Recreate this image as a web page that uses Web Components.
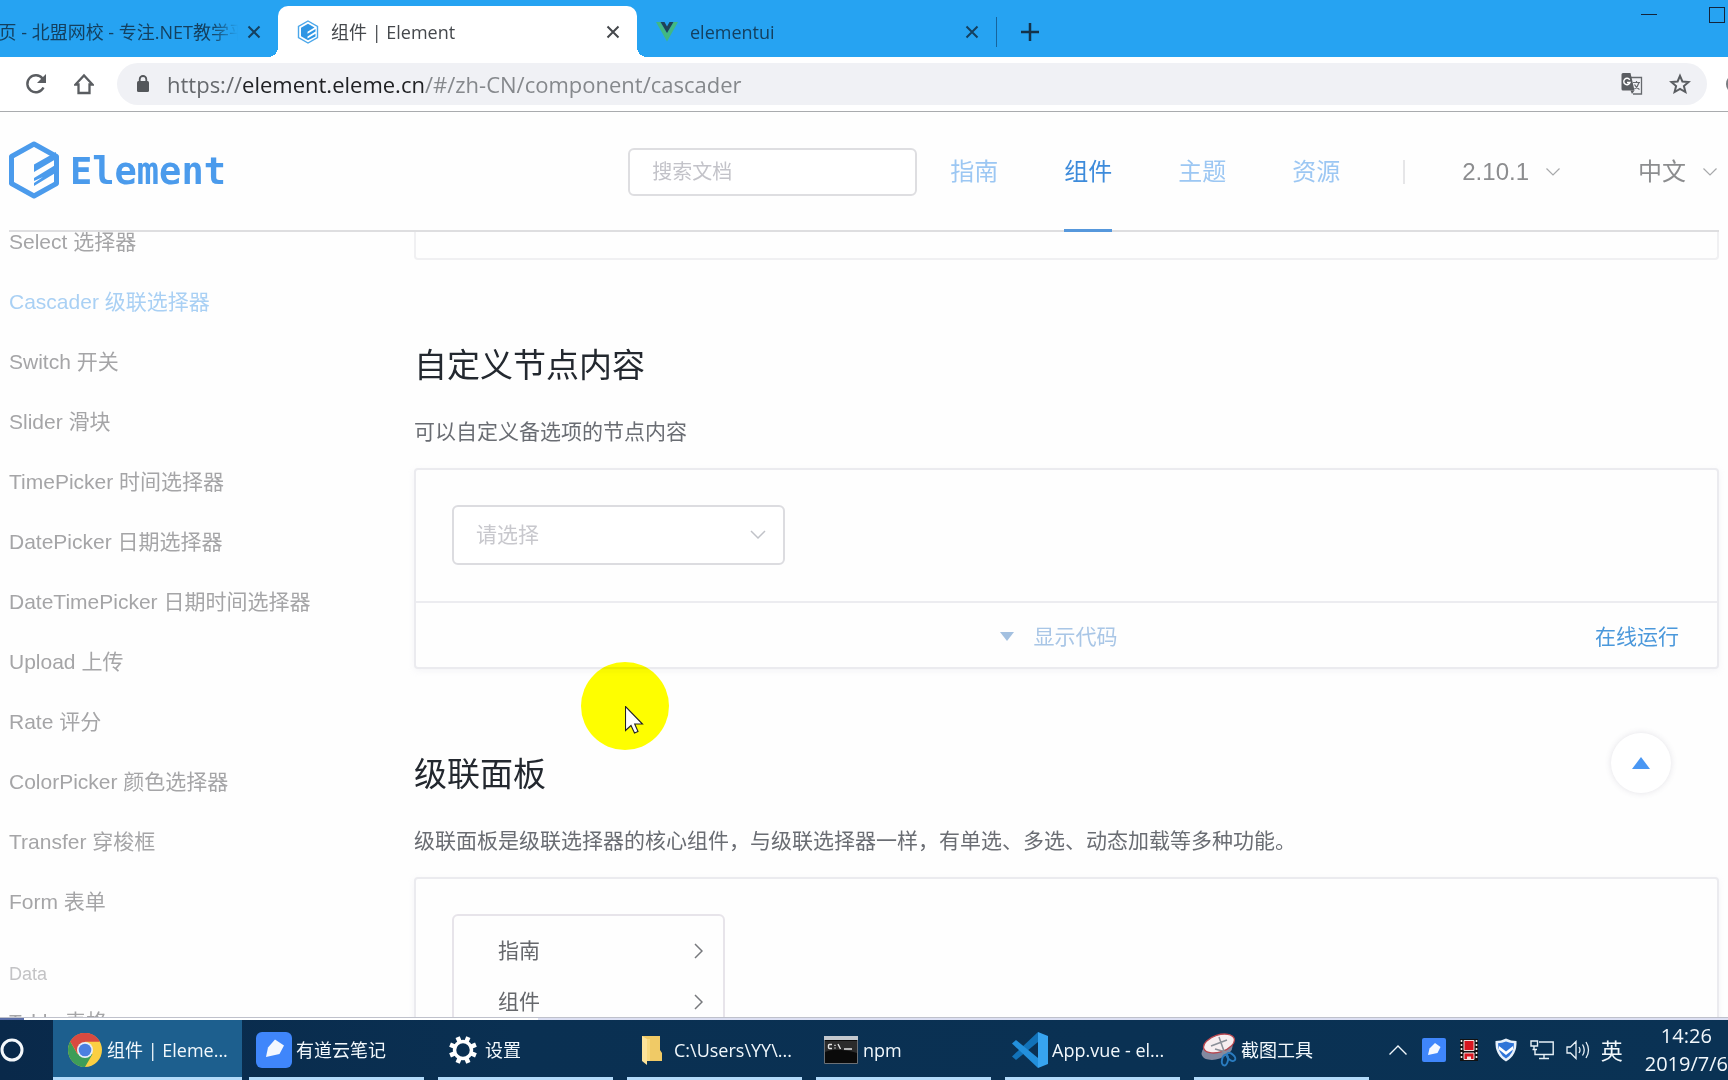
<!DOCTYPE html>
<html lang="zh-CN">
<head>
<meta charset="utf-8">
<title>组件 | Element</title>
<style>
  html, body { margin: 0; height: 100%; }
  body { overflow: hidden; background: #fefefe; font-family: "Liberation Sans", "Noto Sans CJK SC", sans-serif; }
</style>
</head>
<body>
<desktop-view></desktop-view>

<script>
const define = (name, html) => {
  const tpl = document.createElement('template');
  tpl.innerHTML = '<style>*{box-sizing:border-box}button{font:inherit;color:inherit;background:none;border:0;padding:0;margin:0}a{color:inherit;text-decoration:none}svg{display:block;flex:none}</style>' + html;
  customElements.define(name, class extends HTMLElement {
    constructor() {
      super();
      this.attachShadow({ mode: 'open' }).appendChild(tpl.content.cloneNode(true));
    }
  });
};

/* ---------- browser frame ---------- */
define('browser-tab', `
<style>
  :host { display: flex; flex: none; width: 359px; padding-left: 19px; height: 51px; align-items: center; position: relative; color: #14405f; }
  :host([active]) { background: #fff; border-radius: 10px 10px 0 0; color: #45484c; }
  :host([active])::before, :host([active])::after { content: ""; position: absolute; bottom: 0; width: 10px; height: 10px; }
  :host([active])::before { right: 100%; background: radial-gradient(circle at 0 0, transparent 10px, #fff 10px); }
  :host([active])::after { left: 100%; background: radial-gradient(circle at 100% 0, transparent 10px, #fff 10px); }
  :host([first]) { width: 278px; padding-left: 0; }
  .pick { flex: 1; min-width: 0; display: flex; align-items: center; gap: 12px; height: 100%; }
  .label { flex: 1; min-width: 0; overflow: hidden; white-space: nowrap; text-align: left; font-size: 18px; line-height: 28px; }
  :host([first]) .label { display: flex; justify-content: flex-end; -webkit-mask-image: linear-gradient(to right, #000 212px, transparent 238px); }
  .close { width: 14px; height: 14px; margin-right: 17px; }
</style>
<button class="pick" role="tab"><slot name="icon"></slot><span class="label"><slot></slot></span></button>
<button class="close" aria-label="关闭"><svg width="14" height="14" viewBox="0 0 14 14" stroke="currentColor" stroke-width="2" fill="none"><path d="M1.500 1.500l11 11M12.500 1.500l-11 11"/></svg></button>
`);

define('browser-tabs', `
<style>
  :host { display: flex; justify-content: space-between; background: #26a3f2; height: 57px; font-family: "Open Sans", "Noto Sans CJK SC", sans-serif; }
  .tabs { display: flex; align-items: flex-end; }
  .add { display: flex; align-items: center; height: 51px; gap: 24px; }
  .add i { width: 1px; height: 30px; background: #17649c; }
  .win { display: flex; gap: 52px; padding: 7px 3px 0 0; align-items: flex-start; }
</style>
<div class="tabs" role="tablist">
  <browser-tab first>页 - 北盟网校 - 专注.NET教学平</browser-tab>
  <browser-tab active>
    <svg slot="icon" width="22" height="24" viewBox="0 0 22 24"><path d="M11 1l9.500 5.500v11L11 23l-9.500-5.500v-11z" fill="none" stroke="#4ba7ea" stroke-width="1.400"/><path d="M11 3.800l6.500 3.700-7 4.300v2l8-4.800v2.600l-8 4.800v2l8-4.700v2.800L11 20.300l-7-4V7.800z" fill="#2f96e4"/></svg>
    组件 | Element</browser-tab>
  <browser-tab>
    <svg slot="icon" width="22" height="20" viewBox="0 0 22 20"><path d="M0 0h4.500L11 11 17.500 0H22L11 19.500z" fill="#41b883"/><path d="M4.500 0h4L11 4.500 13.500 0h4L11 11z" fill="#1f4258"/></svg>
    elementui</browser-tab>
  <div class="add"><i></i><button aria-label="新标签页"><svg width="18" height="18" viewBox="0 0 18 18" stroke="#14324a" stroke-width="2.500"><path d="M9 0v18M0 9h18"/></svg></button></div>
</div>
<div class="win">
  <button aria-label="最小化"><svg width="16" height="16" viewBox="0 0 16 16" stroke="#14243a"><path d="M0 7.500h16"/></svg></button>
  <button aria-label="最大化"><svg width="16" height="16" viewBox="0 0 16 16" stroke="#14243a" fill="none"><rect x=".5" y=".5" width="15" height="15"/></svg></button>
</div>
`);

define('browser-toolbar', `
<style>
  :host { display: flex; align-items: center; height: 55px; border-bottom: 1px solid #a9abae; background: #fff; padding: 0 0 0 24px; color: #5a5d61; font-family: "Open Sans", "Noto Sans CJK SC", sans-serif; overflow: hidden; }
  .home { margin: 0 23px 0 26px; }
  .bar { flex: 1; display: flex; align-items: center; height: 42px; background: #f0f1f5; border-radius: 21px; padding: 0 16px 0 20px; }
  .url { flex: 1; margin-left: 18px; font-size: 22px; line-height: 30px; color: #85888c; white-space: nowrap; outline: 0; }
  .url b { font-weight: 400; color: #202124; }
  .url span { color: #66696d; }
  .star { margin-left: 26px; }
  .me { width: 21px; height: 21px; overflow: hidden; }
  .me svg { margin-left: 19px; }
</style>
<button aria-label="重新加载"><svg width="24" height="24" viewBox="0 0 24 24" fill="none" stroke="currentColor" stroke-width="2.400"><path d="M19.500 15.500A8.500 8.500 0 1 1 18.500 6.500"/><path d="M22 2v9h-9z" fill="currentColor" stroke="none"/></svg></button>
<button class="home" aria-label="主页"><svg width="20" height="22" viewBox="0 0 20 22" fill="none" stroke="currentColor" stroke-width="2.300"><path d="M1.500 11.500L10 2.500l8.500 9H15.500V20h-11v-8.500z"/></svg></button>
<div class="bar">
  <svg width="12" height="18" viewBox="0 0 12 18"><rect y="6" width="12" height="11" rx="1.500" fill="#54575b"/><path d="M2.700 7V4.300a3.300 3.300 0 0 1 6.600 0V7" fill="none" stroke="#54575b" stroke-width="1.800"/></svg>
  <div class="url" role="textbox" aria-label="网址"><span>https://</span><b>element.eleme.cn</b>/#/zh-CN/component/cascader</div>
  <button aria-label="翻译"><svg width="22" height="22" viewBox="0 0 22 22"><path d="M10 4.500h10.500v16.500H12" fill="none" stroke="#66696d" stroke-width="1.300"/><path d="M2 0h7.500l4 17.500H2a1.500 1.500 0 0 1-1.500-1.500V1.500A1.500 1.500 0 0 1 2 0z" fill="#5a5d61"/><path d="M9.500 17.500h4L11 21z" fill="#5a5d61"/><path d="M8.700 6.800A3.200 3.200 0 1 0 9 9.500H6" fill="none" stroke="#fff" stroke-width="1.400"/><path d="M12 9.500h7M15.500 8v1.500M18 9.500q-1 4-4.500 6.500M13.500 11.500q1.500 3 5 5" fill="none" stroke="#66696d" stroke-width="1.200"/></svg></button>
  <button class="star" aria-label="收藏"><svg width="22" height="22" viewBox="0 0 22 22" fill="none" stroke="currentColor" stroke-width="2"><path d="M11 2.800l2.400 5.700 6.200.5-4.700 4 1.500 6L11 15.800 5.600 19l1.500-6-4.700-4 6.200-.5z"/></svg></button>
</div>
<div class="me"><svg width="20" height="20"><circle cx="10" cy="10" r="10" fill="#777b80"/></svg></div>
`);

/* ---------- site ---------- */
define('site-logo', `
<style>
  :host { display: block; }
  a { display: flex; align-items: center; gap: 11px; color: #4b9bec; font: bold 37px/58px "DejaVu Sans Mono", monospace; }
</style>
<a href="#/"><svg width="50" height="62" viewBox="0 0 50 62"><path d="M25 3L47.500 15.500v27L25 55 2.500 42.500v-27z" fill="none" stroke="#4b9bec" stroke-width="5" stroke-linejoin="round"/><path d="M25 23.500L47 11v7L25 31zM25 37L48 23v8L25 45v-3l9-6-9 4z" fill="#4b9bec"/></svg><span>Element</span></a>
`);

define('nav-link', `
<style>
  :host { display: block; padding: 0 33px; }
  a { display: block; font-size: 24px; line-height: 116px; height: 118px; color: #9cc7f3; white-space: nowrap; }
  :host([active]) a { color: #3d8bdb; border-bottom: 3px solid #5698dc; }
</style>
<a href="#/"><slot></slot></a>
`);

define('nav-drop', `
<style>
  :host { display: block; }
  button { display: flex; align-items: center; gap: 17px; font-size: 24px; line-height: 40px; color: #8c8d8f; }
</style>
<button aria-haspopup="listbox"><slot></slot><svg width="14" height="8" viewBox="0 0 14 8" fill="none" stroke="#a8a9ab" stroke-width="1.200"><path d="M.5.5L7 7 13.500.500"/></svg></button>
`);

define('site-header', `
<style>
  :host { display: block; padding: 0 9px; position: relative; z-index: 1; }
  header { display: flex; align-items: center; height: 120px; padding-top: 2px; border-bottom: 2px solid #dedee0; }
  .search { margin-left: auto; }
  input { display: block; width: 289px; height: 48px; border: 2px solid #dedee1; border-radius: 6px; background: #fff; font: 20px "Liberation Sans", "Noto Sans CJK SC", sans-serif; padding: 0 22px; outline: 0; }
  input::placeholder { color: #c3c3c9; }
  nav { display: flex; height: 118px; align-self: flex-start; }
  i { width: 2px; height: 24px; background: #e6e6e8; margin: 0 57px 0 30px; }
  .lang { margin-left: 78px; margin-right: 2px; }
</style>
<header>
  <site-logo></site-logo>
  <label class="search"><input type="text" placeholder="搜索文档" aria-label="搜索文档"></label>
  <nav><nav-link>指南</nav-link><nav-link active>组件</nav-link><nav-link>主题</nav-link><nav-link>资源</nav-link></nav>
  <i></i>
  <nav-drop>2.10.1</nav-drop>
  <nav-drop class="lang">中文</nav-drop>
</header>
`);

define('side-link', `
<style>
  :host { display: block; }
  a { display: block; font-size: 21px; line-height: 60px; color: #a5a5a7; white-space: nowrap; }
  :host([active]) a { color: #a9d0f4; }
</style>
<a href="#/"><slot></slot></a>
`);

define('side-nav', `
<style>
  :host { display: block; flex: none; width: 405px; overflow: hidden; }
  nav { margin-top: -20px; }
  h4 { margin: 27px 0 3px; font-size: 18px; line-height: 30px; font-weight: 400; color: #c3c3c5; }
</style>
<nav>
  <side-link>Select 选择器</side-link>
  <side-link active>Cascader 级联选择器</side-link>
  <side-link>Switch 开关</side-link>
  <side-link>Slider 滑块</side-link>
  <side-link>TimePicker 时间选择器</side-link>
  <side-link>DatePicker 日期选择器</side-link>
  <side-link>DateTimePicker 日期时间选择器</side-link>
  <side-link>Upload 上传</side-link>
  <side-link>Rate 评分</side-link>
  <side-link>ColorPicker 颜色选择器</side-link>
  <side-link>Transfer 穿梭框</side-link>
  <side-link>Form 表单</side-link>
  <h4>Data</h4>
  <side-link>Table 表格</side-link>
</nav>
`);

define('demo-block', `
<style>
  :host { display: block; border: 2px solid #ebebef; border-radius: 4px; box-shadow: 0 2px 6px rgba(200,200,215,.18); background: #fefefe; }
  .source { padding: 35px 36px 36px; }
  .control { display: flex; align-items: center; height: 66px; border-top: 2px solid #ececf0; padding: 3px 38px 0 0; font-size: 21px; line-height: 30px; }
  .control::before { content: ""; flex: none; width: 106px; }
  .toggle { display: flex; align-items: center; gap: 20px; margin: auto; color: #a9c6e6; }
  a { color: #4b98db; }
  :host([tail]) { border-top: 0; border-radius: 0 0 4px 4px; height: 28px; box-shadow: none; border-color: #f0f0f2; }
  :host([tail]) .source, :host([tail]) .control, :host([open]) .control { display: none; }
</style>
<div class="source"><slot></slot></div>
<div class="control">
  <button class="toggle"><svg width="14" height="9" viewBox="0 0 14 9"><path d="M0 0h14L7 9z" fill="#a3c0e0"/></svg>显示代码</button>
  <a href="#/">在线运行</a>
</div>
`);

define('el-cascader', `
<style>
  :host { display: flex; align-items: center; width: 333px; height: 60px; border: 2px solid #dcdce0; border-radius: 6px; padding: 0 17px 0 22px; background: #fff; }
  input { flex: 1; min-width: 0; border: 0; outline: 0; background: none; padding: 0; font: 21px "Liberation Sans", "Noto Sans CJK SC", sans-serif; }
  input::placeholder { color: #c8c8cd; }
</style>
<input type="text" readonly placeholder="请选择" aria-label="请选择">
<svg width="16" height="10" viewBox="0 0 16 10" fill="none" stroke="#c0c2c8" stroke-width="1.500"><path d="M1 1l7 7 7-7"/></svg>
`);

define('panel-item', `
<style>
  :host { display: block; }
  button { display: flex; width: 100%; align-items: center; justify-content: space-between; padding: 0 20px 0 44px; font-size: 21px; line-height: 51px; color: #66686c; }
</style>
<button><slot></slot><svg width="9" height="16" viewBox="0 0 9 16" fill="none" stroke="#77797d" stroke-width="1.500"><path d="M1 1l7 7-7 7"/></svg></button>
`);

define('el-cascader-panel', `
<style>
  :host { display: block; width: 273px; height: 306px; border: 2px solid #e7e4ea; border-radius: 6px; padding-top: 9px; }
</style>
<slot></slot>
`);

define('doc-content', `
<style>
  :host { display: block; flex: 1; min-width: 0; }
  h3 { margin: 83px 0 28px; font-size: 33px; line-height: 46px; font-weight: 400; color: #23282f; }
  p { margin: 0 0 21px; font-size: 21px; line-height: 30px; color: #6a6d73; }
</style>
<demo-block tail></demo-block>
<h3>自定义节点内容</h3>
<p>可以自定义备选项的节点内容</p>
<demo-block><el-cascader></el-cascader></demo-block>
<h3>级联面板</h3>
<p>级联面板是级联选择器的核心组件，与级联选择器一样，有单选、多选、动态加载等多种功能。</p>
<demo-block open><el-cascader-panel><panel-item>指南</panel-item><panel-item>组件</panel-item></el-cascader-panel></demo-block>
`);

define('back-top', `
<style>
  :host { display: block; position: absolute; right: 57px; bottom: 287px; }
  button { display: flex; align-items: center; justify-content: center; width: 60px; height: 60px; border-radius: 30px; background: #fff; box-shadow: 0 0 6px rgba(90,80,110,.16); }
</style>
<button aria-label="回到顶部"><svg width="18" height="12" viewBox="0 0 18 12"><path d="M9 0l9 12H0z" fill="#4a97f3"/></svg></button>
`);

define('mouse-pointer', `
<style>
  :host { display: block; position: absolute; left: 581px; top: 662px; width: 88px; height: 88px; border-radius: 50%; background: #ff0; mix-blend-mode: multiply; z-index: 2; }
  svg { margin: 44px 0 0 44px; }
</style>
<svg width="19" height="28" viewBox="0 0 19 28"><path d="M.5.5v24l5.500-5 3.500 7.500 3.500-1.500-3.300-7.500h7.800z" fill="#fff" stroke="#222" stroke-width="1.100"/></svg>
`);

/* ---------- taskbar ---------- */
define('task-item', `
<style>
  :host { display: block; flex: 0 1 189px; min-width: 0; height: 60px; }
  button { position: relative; display: flex; align-items: center; gap: 4px; width: 100%; height: 60px; padding: 0 7px 0 14px; white-space: nowrap; color: #f2f8fc; }
  button::after { content: ""; position: absolute; left: 7px; right: 7px; bottom: 0; height: 3px; background: #b3dbfa; }
  :host([active]) button { background: #1d5f8e; }
  :host([active]) button::after { left: 0; right: 0; }
  .icon { display: flex; flex: none; justify-content: center; width: 36px; }
</style>
<button><span class="icon"><slot name="icon"></slot></span><slot></slot></button>
`);

define('task-bar', `
<style>
  :host { display: flex; align-items: center; flex: none; height: 60px; background: linear-gradient(90deg, #09294a, #0a3052 30%, #0a3254); color: #f2f8fc; font: 18px/28px "Open Sans", "Noto Sans CJK SC", sans-serif; overflow: hidden; }
  .cortana { flex: none; width: 53px; }
  .items { flex: 1; display: flex; min-width: 0; }
  .tray { display: flex; flex: none; align-items: center; }
  .tray svg { margin-right: 12px; }
  .ime { font-size: 22px; margin-right: 22px; }
  time { display: block; text-align: center; font-size: 20px; white-space: nowrap; }
</style>
<button class="cortana" aria-label="Cortana"><svg width="24" height="24" viewBox="0 0 24 24"><circle cx="12" cy="12" r="10" fill="none" stroke="#f4f8fb" stroke-width="3"/></svg></button>
<div class="items">
  <task-item active><svg slot="icon" width="34" height="34" viewBox="0 0 34 34"><circle cx="17" cy="17" r="17" fill="#fbcf43"/><path d="M17 17L2.300 8.500A17 17 0 0 1 31.700 8.500H17z" fill="#d84a41"/><path d="M2.300 8.500A17 17 0 0 0 17 34l7.400-12.800L17 17l-7.400 4.200z" fill="#3d9d58"/><path d="M2.300 8.500A17 17 0 0 1 31.700 8.500H17L9.600 21z" fill="#d84a41"/><circle cx="17" cy="17" r="8" fill="#e9eef8"/><circle cx="17" cy="17" r="6.300" fill="#4b7fe0"/></svg>组件 | Eleme...</task-item>
  <task-item><svg slot="icon" width="36" height="36" viewBox="0 0 36 36"><rect width="36" height="36" rx="6" fill="#3f86fb"/><path d="M10 25l2-9.500L19 7.500l9 6-4.500 8.500z" fill="#f4f8ff"/></svg>有道云笔记</task-item>
  <task-item><svg slot="icon" width="28" height="28" viewBox="0 0 28 28" fill="none" stroke="#fff"><circle cx="14" cy="14" r="8.500" stroke-width="3.500"/><g stroke-width="4.500"><path d="M14 0v5M14 23v5M0 14h5M23 14h5" transform="rotate(22.500 14 14)"/><path d="M14 0v5M14 23v5M0 14h5M23 14h5" transform="rotate(67.500 14 14)"/></g></svg>设置</task-item>
  <task-item><svg slot="icon" width="22" height="32" viewBox="0 0 22 32"><path d="M1 2h18v14l2 3v8H1z" fill="#f0ca66"/><path d="M1 2l5 3v26l-5-4z" fill="#fce39a"/><path d="M6 5h3v22H6z" fill="#f8d97f"/></svg>C:\\Users\\YY\\...</task-item>
  <task-item><svg slot="icon" width="34" height="28" viewBox="0 0 34 28"><path d="M.5.5h33v27H.5z" fill="#0a0a0a" stroke="#6b7076"/><path d="M0 0h34v4H0z" fill="#c3c8ce"/><path d="M1 16Q12 11 33 17V5H1z" fill="#2b2b2b"/><path d="M8 8.500H5.500q-1 0-1 1v2q0 1 1 1H8M11 8.800v1.200M11 11.500v1M14 8l2.500 5M20 13h8" fill="none" stroke="#e4e4e4" stroke-width="1.400"/></svg>npm</task-item>
  <task-item><svg slot="icon" width="36" height="36" viewBox="0 0 36 36"><path d="M26 0v10L4 28l-4-3.500z" fill="#1272b8"/><path d="M26 36V26L4 8 0 11.500z" fill="#2390dc"/><path d="M26 0l10 4v28l-10 4z" fill="#37a4f0"/></svg>App.vue - el...</task-item>
  <task-item><svg slot="icon" width="36" height="34" viewBox="0 0 36 34" fill="none"><ellipse cx="16" cy="17" rx="16" ry="9" transform="rotate(-18 16 17)" fill="#8389a0"/><ellipse cx="18" cy="10.500" rx="16" ry="8.500" transform="rotate(-18 18 10.500)" fill="#f6eef0" stroke="#b8474f" stroke-width="1.300"/><path d="M18 4l6 17M10 13l16-6M14 16l11 3" stroke="#8a8f98" stroke-width="1.500"/><ellipse cx="24" cy="27" rx="3" ry="5.500" transform="rotate(12 24 27)" stroke="#2a7cc0" stroke-width="2"/><ellipse cx="30" cy="24" rx="3" ry="5" transform="rotate(-50 30 24)" stroke="#2a7cc0" stroke-width="2"/></svg>截图工具</task-item>
</div>
<div class="tray">
  <svg style="margin-right:15px" width="18" height="10" viewBox="0 0 18 10" fill="none" stroke="#f2f8fc" stroke-width="1.400"><path d="M.5 9.500L9 1l8.500 8.500"/></svg>
  <svg style="margin-right:14px" width="24" height="24" viewBox="0 0 24 24"><rect width="24" height="24" rx="2" fill="#3f86fb"/><path d="M6 17l1.500-6.500L13 5l5.500 4-3 6z" fill="#f4f8ff"/></svg>
  <svg style="margin-right:16px" width="18" height="22" viewBox="0 0 18 22"><path d="M0 0h18v22H0z" fill="#111"/><path d="M1.500 1v20M16.500 1v20" stroke="#eee" stroke-width="1.600" stroke-dasharray="2 2"/><path d="M4 1.500h10v10H4zM4 14h10v6.500H4z" fill="#d8151e" stroke="#f3dede"/><path d="M7 20.500v-3h4v3" fill="#f3dede"/></svg>
  <svg width="24" height="24" viewBox="0 0 24 24"><path d="M12 .5q5 2.500 10.500 2.500.8 14-10.500 20.500Q.7 17 1.500 3 7 3 12 .5z" fill="#e8f1fb"/><path d="M12 3.500q4 1.500 8 1.700Q20 15.500 12 20.500 4 15.500 4 5.200 8 5 12 3.500z" fill="#2f74d8"/><path d="M5 8l7 5.500L19 8v3.500L12 17l-7-5.500z" fill="#fff"/></svg>
  <svg width="24" height="20" viewBox="0 0 24 20" fill="none" stroke="#e8f1f7" stroke-width="1.400"><path d="M9 2h14.200v12.500H5V9M14 14.500v4M9 18.500h10M1 1h6.500v5H1zM4 6v3.500M2.500 9.500H7"/></svg>
  <svg style="margin-right:11px" width="24" height="20" viewBox="0 0 24 20" fill="none" stroke="#e8f1f7" stroke-width="1.300"><path d="M1 7h3.500L10 1.500v17L4.500 13H1zM13 7q2 3 0 6M16.500 4.500q3.500 5.500 0 11M20 2q5 8 0 16"/></svg>
  <span class="ime">英</span>
  <time>14:26<br>2019/7/6</time>
</div>
`);

define('desktop-view', `
<style>
  :host { display: flex; flex-direction: column; height: 100vh; position: relative; overflow: hidden; }
  browser-tabs, browser-toolbar, site-header { flex: none; }
  main { flex: 1; min-height: 0; display: flex; overflow: hidden; padding: 0 9px; }
  .edge { flex: none; height: 3px; border-top: 1px solid #bfc1cb; background: linear-gradient(90deg, #5a6ea8 24px, #fff 24px, #fff 538px, #dcdff2 538px); }
</style>
<browser-tabs></browser-tabs>
<browser-toolbar></browser-toolbar>
<site-header></site-header>
<main><side-nav></side-nav><doc-content></doc-content></main>
<div class="edge"></div>
<task-bar></task-bar>
<back-top></back-top>
<mouse-pointer></mouse-pointer>
`);
</script>
</body>
</html>
